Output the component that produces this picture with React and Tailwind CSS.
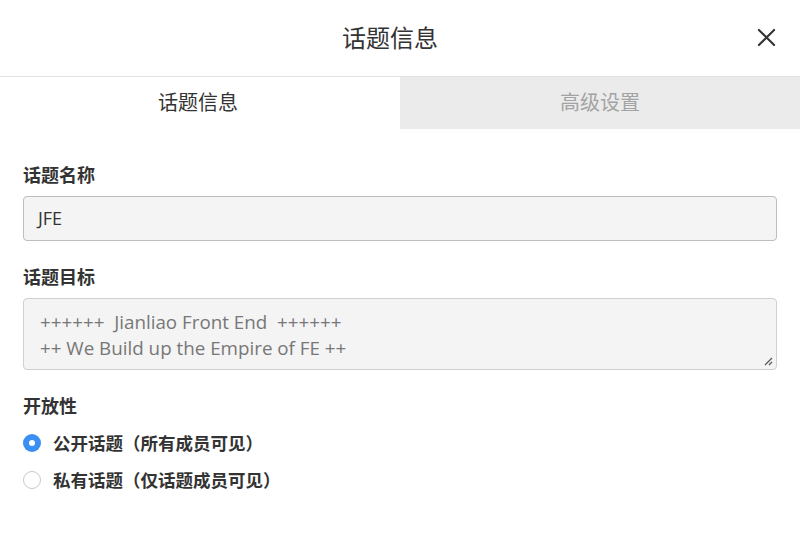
import React from "react";

export default function App() {
  return (
    <div className="w-[800px] h-[535px] bg-white text-[#333] font-['Open_Sans','Noto_Sans_CJK_SC',sans-serif] flex flex-col">
      <div className="h-[77px] relative flex items-center justify-center pr-[20px] border-b border-[#e2e2e2]">
        <span className="text-[24px] text-[#333] leading-[30px]">话题信息</span>
        <svg className="absolute right-[24px] top-[28px]" width="19" height="19" viewBox="0 0 20 20">
          <path d="M2 2 L18 18 M18 2 L2 18" stroke="#333" strokeWidth="2.2" strokeLinecap="round" />
        </svg>
      </div>
      <div className="flex h-[52px]">
        <div className="w-[400px] flex items-center justify-center pr-[4px] text-[20px] text-[#333] bg-white">话题信息</div>
        <div className="w-[400px] flex items-center justify-center text-[20px] text-[#a3a3a3] bg-[#ebebeb]">高级设置</div>
      </div>
      <div className="px-[23px] pt-[35px] flex flex-col">
        <div className="text-[18px] font-bold text-[#333] leading-[22px]">话题名称</div>
        <div className="mt-[10px] h-[45px] rounded-[4px] border-[1.5px] border-[#bdbdbd] bg-[#f4f4f4] flex items-center px-[14px] text-[18px] text-[#333]">JFE</div>
        <div className="mt-[25px] text-[18px] font-bold text-[#333] leading-[22px]">话题目标</div>
        <div className="mt-[10px] h-[72px] rounded-[4px] border border-[#d0d0d0] bg-[#f4f4f4] relative px-[16px] pt-[10px] text-[18.8px] text-[#777] leading-[26px] whitespace-pre">
          <div>{"++++++  Jianliao Front End  ++++++"}</div>
          <div>{"++ We Build up the Empire of FE ++"}</div>
          <svg className="absolute right-[3px] bottom-[3px]" width="9" height="9" viewBox="0 0 9 9">
            <path d="M8 1 L1 8 M8 5 L5 8" stroke="#555" strokeWidth="1.2" />
          </svg>
        </div>
        <div className="mt-[25px] text-[18px] font-bold text-[#333] leading-[22px]">开放性</div>
        <div className="mt-[14px] flex items-center h-[24px]">
          <span className="w-[18px] h-[18px] rounded-full bg-[#3a8ff3] flex items-center justify-center">
            <span className="w-[6px] h-[6px] rounded-full bg-white" />
          </span>
          <span className="ml-[12px] text-[17.5px] font-bold text-[#333]">公开话题（所有成员可见）</span>
        </div>
        <div className="mt-[13px] flex items-center h-[24px]">
          <span className="w-[18px] h-[18px] rounded-full border border-[#c8c8c8] bg-white" />
          <span className="ml-[12px] text-[17.5px] font-bold text-[#333]">私有话题（仅话题成员可见）</span>
        </div>
      </div>
    </div>
  );
}
